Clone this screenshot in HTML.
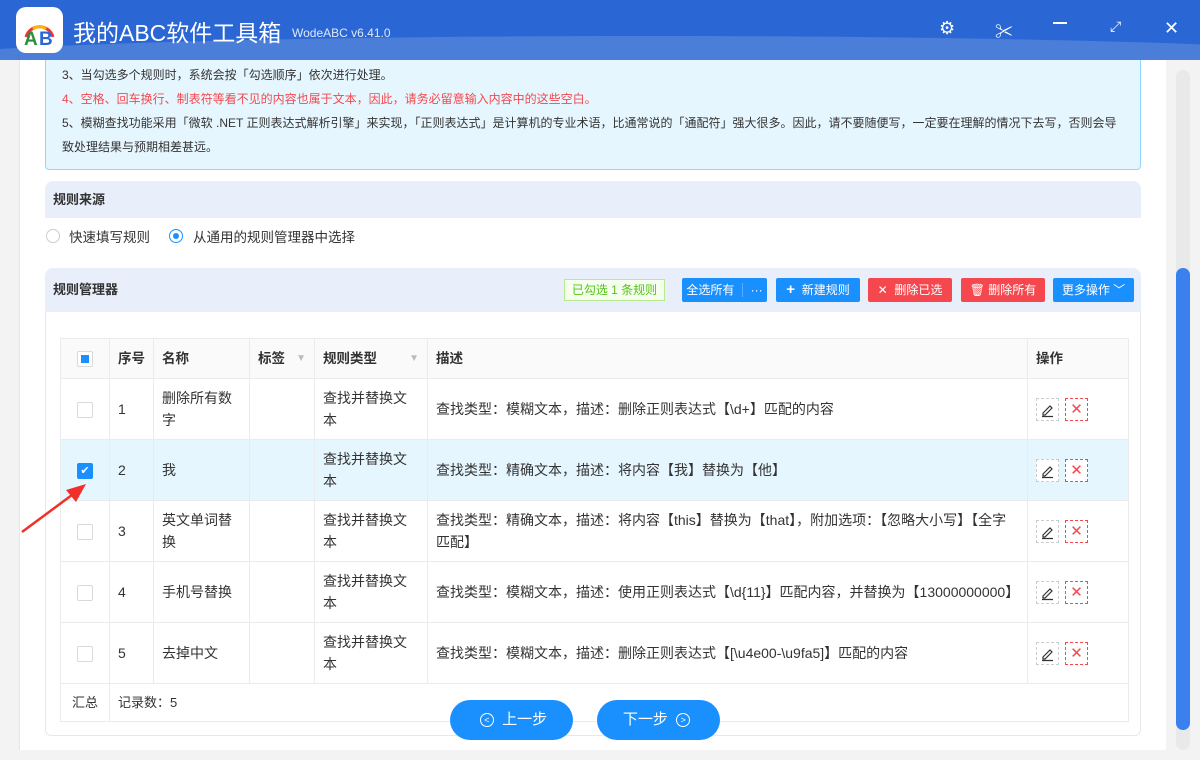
<!DOCTYPE html>
<html><head><meta charset="utf-8"><style>
*{box-sizing:border-box;margin:0;padding:0}
body{width:1200px;height:760px;overflow:hidden;background:#f3f3f3;font-family:"Liberation Sans","Noto Sans CJK SC",sans-serif;font-size:13px;color:#333;position:relative}
.title{position:absolute;left:0;top:0;width:1200px;height:60px;background:#2a67d4;overflow:hidden}
.title .wave{position:absolute;left:-100px;top:36px;width:1500px;height:80px;background:#4a7ed9;border-radius:50%/26px}
.logo{position:absolute;left:16px;top:7px;width:47px;height:46px;background:#fff;border-radius:10px}
.ttl{position:absolute;left:73px;top:14px;color:#fff;font-size:23px}
.ver{position:absolute;left:292px;top:26px;color:#dfe8f8;font-size:12px}
.ic{position:absolute;top:18px;color:#fff;font-size:18px}
.main{position:absolute;left:20px;top:60px;width:1146px;height:690px;background:#fff}
.lstrip{position:absolute;left:8px;top:60px;width:12px;height:690px;background:#f3f3f3;border-right:1px solid #e6e6e6}
.sb{position:absolute;left:1176px;top:70px;width:14px;height:680px;background:#e9e9e9;border-radius:7px}
.sbt{position:absolute;left:1176px;top:268px;width:14px;height:462px;background:#3a80ef;border-radius:7px}
.notice{position:absolute;left:45px;top:60px;width:1096px;height:110px;background:#e6f6fe;border:1px solid #91d5ff;border-top:none;border-radius:0 0 4px 4px;font-size:12px;padding:3px 16px;line-height:24px}
.red{color:#f5484e}
.sec{position:absolute;left:45px;width:1096px;background:#e8eefa;border-radius:8px 8px 0 0;font-weight:bold;font-size:13px;padding-left:8px}
.radio{position:absolute;top:229px;width:14px;height:14px;border:1px solid #ccc;border-radius:50%;background:#fff}
.rtxt{position:absolute;top:226px;font-size:13.5px}
.btn{position:absolute;top:278px;height:24px;color:#fff;font-size:12px;line-height:24px;text-align:center;border-radius:2px}
.panel{position:absolute;left:45px;top:312px;width:1096px;height:424px;border:1px solid #e8e8e8;border-top:none;border-radius:0 0 6px 6px}
table{position:absolute;left:60px;top:338px;width:1068px;border-collapse:collapse;font-size:14px;table-layout:fixed}
td,th{border:1px solid #ebebeb;padding:0 8px;text-align:left;vertical-align:middle;line-height:22px;overflow:hidden}
th{height:40px;background:#fafafa;font-weight:bold;font-size:13.5px}
tr.r td{height:61px}
tr.sel td{background:#e6f6fe}
.cb{display:inline-block;width:16px;height:16px;border:1px solid #d9d9d9;border-radius:2px;background:#fff;vertical-align:middle;position:relative}
.ed{display:inline-block;width:23px;height:23px;border:1px dashed #ccc;vertical-align:middle;margin-right:6px;position:relative}
.dl{display:inline-block;width:23px;height:23px;border:1px dashed #f5484e;vertical-align:middle;color:#f5484e;text-align:center;line-height:21px;font-size:15px}
.nav{position:absolute;top:700px;height:40px;width:123px;background:#1a90ff;border-radius:20px;color:#fff;font-size:15px;line-height:40px;text-align:center}
.circ{display:inline-block;width:14px;height:14px;border:1px solid #fff;border-radius:50%;font-size:9px;line-height:12px;vertical-align:middle;margin:0 4px}
.filt{float:right;color:#bbb;font-size:10px}
</style></head><body>
<div class="title"><div class="wave"></div>
<div class="logo"><svg width="47" height="46"><path d="M10 30 A14 14 0 0 1 37 30" fill="none" stroke="#e33" stroke-width="3"/><path d="M17 22 A10 10 0 0 1 30 22" fill="none" stroke="#f5b800" stroke-width="3"/><text x="8" y="38" font-size="19" font-weight="bold" fill="#2a8f3a" font-family="Liberation Sans">A</text><text x="23" y="38" font-size="19" font-weight="bold" fill="#2a67d4" font-family="Liberation Sans">B</text></svg></div>
<div class="ttl">我的ABC软件工具箱</div><div class="ver">WodeABC v6.41.0</div>
<div class="ic" style="left:939px">⚙</div><div class="ic" style="left:995px">✂</div>
<div class="ic" style="left:1053px;top:22px;width:14px;height:2px;background:#fff"></div>
<div class="ic" style="left:1110px;font-size:14px">⤢</div><div class="ic" style="left:1164px">✕</div>
</div>
<div class="lstrip"></div><div class="main"></div>
<div class="sb"></div><div class="sbt"></div>
<div class="notice">3、当勾选多个规则时，系统会按「勾选顺序」依次进行处理。<br><span class="red">4、空格、回车换行、制表符等看不见的内容也属于文本，因此，请务必留意输入内容中的这些空白。</span><br>5、模糊查找功能采用「微软 .NET 正则表达式解析引擎」来实现，「正则表达式」是计算机的专业术语，比通常说的「通配符」强大很多。因此，请不要随便写，一定要在理解的情况下去写，否则会导致处理结果与预期相差甚远。</div>
<div class="sec" style="top:181px;height:37px;line-height:37px">规则来源</div>
<div class="radio" style="left:46px"></div><div class="rtxt" style="left:69px">快速填写规则</div>
<div class="radio" style="left:169px;border-color:#1a90ff"><div style="position:absolute;left:3px;top:3px;width:6px;height:6px;border-radius:50%;background:#1a90ff"></div></div><div class="rtxt" style="left:193px">从通用的规则管理器中选择</div>
<div class="sec" style="top:268px;height:44px;line-height:44px">规则管理器</div>
<div style="position:absolute;left:564px;top:279px;width:101px;height:22px;border:1px solid #b7eb8f;background:#f6ffed;color:#52c41a;font-size:12px;line-height:20px;text-align:center">已勾选 1 条规则</div>
<div class="btn" style="left:682px;width:85px;background:#1a90ff">全选所有 <span style="border-left:1px solid #5aaeff;padding-left:8px;margin-left:4px">···</span></div>
<div class="btn" style="left:776px;width:84px;background:#1a90ff"><b style="font-size:15px">+</b>&nbsp; 新建规则</div>
<div class="btn" style="left:868px;width:84px;background:#f5484e">✕&nbsp; 删除已选</div>
<div class="btn" style="left:961px;width:84px;background:#f5484e">🗑 删除所有</div>
<div class="btn" style="left:1053px;width:81px;background:#1a90ff">更多操作 ﹀</div>
<div class="panel"></div>
<table>
<colgroup><col style="width:49px"><col style="width:44px"><col style="width:96px"><col style="width:65px"><col style="width:113px"><col style="width:600px"><col style="width:101px"></colgroup>
<tr><th style="text-align:center"><span class="cb"><span style="position:absolute;left:3px;top:3px;width:8px;height:8px;background:#1a90ff"></span></span></th><th>序号</th><th>名称</th><th>标签<span class="filt">▼</span></th><th>规则类型<span class="filt">▼</span></th><th>描述</th><th>操作</th></tr>
<tr class="r"><td style="text-align:center"><span class="cb"></span></td><td>1</td><td>删除所有数字</td><td></td><td>查找并替换文本</td><td>查找类型：模糊文本，描述：删除正则表达式【\d+】匹配的内容</td><td><span class="ed"><svg width="21" height="21"><path d="M6 14 L13 7 L15 9 L8 16 L6 16Z M5 17.5 H16" fill="none" stroke="#333" stroke-width="1.2"/></svg></span><span class="dl">✕</span></td></tr>
<tr class="r sel"><td style="text-align:center"><span class="cb" style="background:#1a90ff;border-color:#1a90ff;color:#fff;font-size:11px;line-height:14px;text-align:center">✔</span></td><td>2</td><td>我</td><td></td><td>查找并替换文本</td><td>查找类型：精确文本，描述：将内容【我】替换为【他】</td><td><span class="ed" style="background:#fff"><svg width="21" height="21"><path d="M6 14 L13 7 L15 9 L8 16 L6 16Z M5 17.5 H16" fill="none" stroke="#333" stroke-width="1.2"/></svg></span><span class="dl" style="background:#fff">✕</span></td></tr>
<tr class="r"><td style="text-align:center"><span class="cb"></span></td><td>3</td><td>英文单词替换</td><td></td><td>查找并替换文本</td><td>查找类型：精确文本，描述：将内容【this】替换为【that】，附加选项：【忽略大小写】【全字匹配】</td><td><span class="ed"><svg width="21" height="21"><path d="M6 14 L13 7 L15 9 L8 16 L6 16Z M5 17.5 H16" fill="none" stroke="#333" stroke-width="1.2"/></svg></span><span class="dl">✕</span></td></tr>
<tr class="r"><td style="text-align:center"><span class="cb"></span></td><td>4</td><td>手机号替换</td><td></td><td>查找并替换文本</td><td>查找类型：模糊文本，描述：使用正则表达式【\d{11}】匹配内容，并替换为【13000000000】</td><td><span class="ed"><svg width="21" height="21"><path d="M6 14 L13 7 L15 9 L8 16 L6 16Z M5 17.5 H16" fill="none" stroke="#333" stroke-width="1.2"/></svg></span><span class="dl">✕</span></td></tr>
<tr class="r"><td style="text-align:center"><span class="cb"></span></td><td>5</td><td>去掉中文</td><td></td><td>查找并替换文本</td><td>查找类型：模糊文本，描述：删除正则表达式【[\u4e00-\u9fa5]】匹配的内容</td><td><span class="ed"><svg width="21" height="21"><path d="M6 14 L13 7 L15 9 L8 16 L6 16Z M5 17.5 H16" fill="none" stroke="#333" stroke-width="1.2"/></svg></span><span class="dl">✕</span></td></tr>
<tr><td style="height:38px;text-align:center;padding:0;font-size:13px">汇总</td><td colspan="6" style="font-size:13px">记录数：5</td></tr>
</table>
<svg style="position:absolute;left:14px;top:476px" width="80" height="60"><path d="M8 56 L62 16" stroke="#f0302a" stroke-width="2.5"/><path d="M72 8 L52 14 L62 26Z" fill="#f0302a"/></svg>
<div class="nav" style="left:450px"><span class="circ">&lt;</span> 上一步</div>
<div class="nav" style="left:597px">下一步 <span class="circ">&gt;</span></div>
</body></html>
